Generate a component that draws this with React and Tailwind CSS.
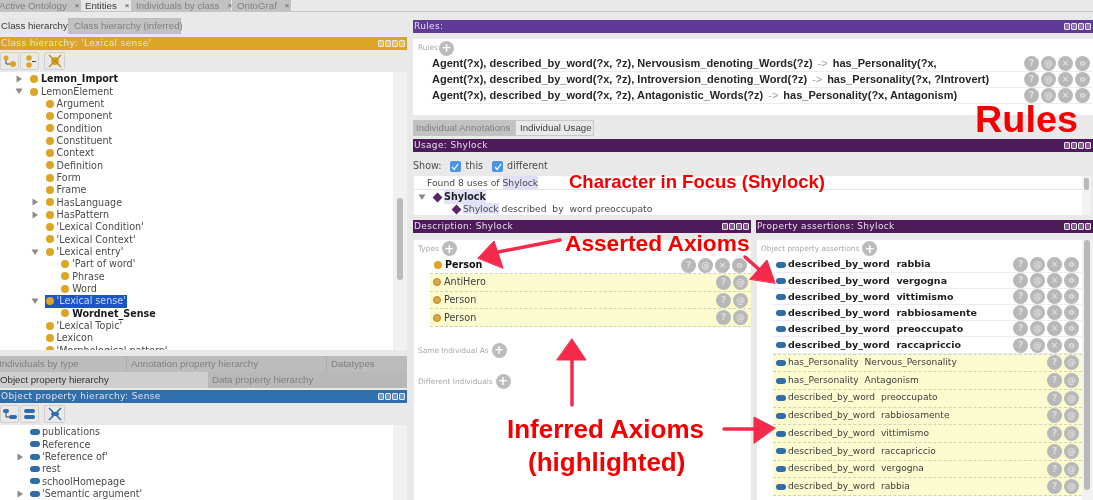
import React from "react";

const sans = "font-['DejaVu_Sans',sans-serif]";
const helv = "font-['Liberation_Sans',sans-serif]";

function HeaderBar({ title, color, className = "" }) {
  return (
    <div className={`h-[13px] flex items-center justify-between pl-[1px] pr-[2px] ${color} ${className}`}>
      <span className={`${sans} text-[9px] tracking-[0.35px] text-[#e6dfe8] whitespace-nowrap leading-none`}>{title}</span>
      <span className="flex gap-[1px]">
        {[0, 1, 2, 3].map((i) => (
          <span key={i} className="w-[6px] h-[7px] border border-[#e8e8e8] bg-white/30 rounded-[1px]" />
        ))}
      </span>
    </div>
  );
}

function Caret({ open }) {
  return (
    <svg width="8" height="8" viewBox="0 0 8 8" className="shrink-0">
      {open ? <path d="M0.5 1.5H7.5L4 7Z" fill="#8a8a8a" /> : <path d="M1.5 0.5V7.5L7 4Z" fill="#8a8a8a" />}
    </svg>
  );
}

function Dot({ size = 8 }) {
  return <span className="rounded-full bg-[#dba625] shrink-0" style={{ width: size, height: size }} />;
}

function Prop({ w = 10 }) {
  return <span className="h-[6px] rounded-[3px] bg-[#2f6ca8] shrink-0" style={{ width: w }} />;
}

const classRows = [
  { t: "Lemon_Import", d: 0, c: "closed", b: true },
  { t: "LemonElement", d: 0, c: "open" },
  { t: "Argument", d: 1 },
  { t: "Component", d: 1 },
  { t: "Condition", d: 1 },
  { t: "Constituent", d: 1 },
  { t: "Context", d: 1 },
  { t: "Definition", d: 1 },
  { t: "Form", d: 1 },
  { t: "Frame", d: 1 },
  { t: "HasLanguage", d: 1, c: "closed" },
  { t: "HasPattern", d: 1, c: "closed" },
  { t: "'Lexical Condition'", d: 1 },
  { t: "'Lexical Context'", d: 1 },
  { t: "'Lexical entry'", d: 1, c: "open" },
  { t: "'Part of word'", d: 2 },
  { t: "Phrase", d: 2 },
  { t: "Word", d: 2 },
  { t: "'Lexical sense'", d: 1, c: "open", sel: true },
  { t: "Wordnet_Sense", d: 2, b: true },
  { t: "'Lexical Topic'", d: 1 },
  { t: "Lexicon", d: 1 },
  { t: "'Morphological pattern'", d: 1 },
];

const propRows = [
  { t: "publications" },
  { t: "Reference" },
  { t: "'Reference of'", c: true },
  { t: "rest" },
  { t: "schoolHomepage" },
  { t: "'Semantic argument'", c: true },
];

function ClassRow({ r }) {
  return (
    <div className="h-[12.33px] flex items-center relative" style={{ paddingLeft: 30 + r.d * 15.6 }}>
      {r.c && (
        <span className="absolute top-[2px]" style={{ left: 15 + r.d * 15.6 }}>
          <Caret open={r.c === "open"} />
        </span>
      )}
      <span className={`flex items-center gap-[3px] h-[13px] ${r.sel ? "bg-[#1c55c8] pl-[1px] -ml-[1px] pr-[1px]" : ""}`}>
        <Dot />
        <span
          className={`${sans} text-[9.6px] leading-none whitespace-nowrap ${r.b ? "font-bold text-[#1a1a1a]" : r.sel ? "text-[#c8d6f2]" : "text-[#4a4a4a]"}`}
        >
          {r.t}
        </span>
      </span>
    </div>
  );
}

function ToolIcons({ kind }) {
  const c = kind === "gold" ? "#dba625" : "#2f6ca8";
  return (
    <div className="h-[22px] flex items-center gap-[1px] pl-0">
      <span className="w-[19px] h-[18px] border border-[#d0d0d0] rounded-[2px] flex items-center justify-center">
        <svg width="14" height="13" viewBox="0 0 14 13">
          <path d="M3 3V9H9" stroke="#444" fill="none" />
          {kind === "gold" ? (
            <>
              <circle cx="3" cy="3" r="2.5" fill={c} />
              <circle cx="10" cy="9" r="3" fill={c} />
            </>
          ) : (
            <>
              <rect x="0" y="1" width="6" height="4" rx="2" fill={c} />
              <rect x="6" y="7" width="8" height="4" rx="2" fill={c} />
            </>
          )}
        </svg>
      </span>
      <span className="w-[19px] h-[18px] border border-[#d0d0d0] rounded-[2px] flex items-center justify-center">
        <svg width="14" height="13" viewBox="0 0 14 13">
          {kind === "gold" ? (
            <>
              <circle cx="6" cy="3" r="2.8" fill={c} />
              <circle cx="6" cy="10" r="2.8" fill={c} />
              <path d="M9 6.5H13" stroke="#444" />
            </>
          ) : (
            <>
              <rect x="1" y="1" width="11" height="4" rx="2" fill={c} />
              <rect x="1" y="7" width="11" height="4" rx="2" fill={c} />
            </>
          )}
        </svg>
      </span>
      <span className="w-[21px] h-[18px] border border-[#d0d0d0] rounded-[2px] flex items-center justify-center ml-[4px]">
        <svg width="14" height="14" viewBox="0 0 14 14">
          {kind === "gold" ? (
            <>
              <circle cx="7" cy="7" r="4" fill={c} />
              <path d="M1 1L13 13M13 1L1 13" stroke="#b98a20" strokeWidth="1.4" />
            </>
          ) : (
            <>
              <rect x="3" y="5" width="8" height="4" rx="2" fill={c} />
              <path d="M1 1L13 13M13 1L1 13" stroke={c} strokeWidth="1.6" />
            </>
          )}
        </svg>
      </span>
    </div>
  );
}

function Circles({ glyphs }) {
  return (
    <span className="flex gap-[2px] shrink-0">
      {glyphs.map((g, i) => (
        <span
          key={i}
          className={`${sans} w-[15px] h-[15px] rounded-full bg-[#b8b8b8] text-[#dedede] text-[9px] font-bold leading-none flex items-center justify-center`}
        >
          {g}
        </span>
      ))}
    </span>
  );
}

function AddBtn({ size = 15 }) {
  return (
    <span
      className={`${sans} rounded-full bg-[#bcbcbc] text-white font-bold text-[12px] leading-none flex items-center justify-center shrink-0`}
      style={{ width: size, height: size }}
    >
      +
    </span>
  );
}

function SectionLabel({ children }) {
  return <span className={`${sans} text-[7.4px] text-[#a8a8a8] whitespace-nowrap`}>{children}</span>;
}

function RuleRow({ children }) {
  return (
    <div className="h-[16px] ml-[5px] flex items-center justify-between border-b border-[#ececec] pr-[2px]">
      <span className={`${helv} text-[11px] font-bold text-[#262626] whitespace-pre pl-[1px]`}>{children}</span>
      <Circles glyphs={["?", "@", "×", "o"]} />
    </div>
  );
}

function Arrow({ children }) {
  return <span className="font-normal text-[#a0a0a0] mx-[5px]">{children}</span>;
}

function AssertedType({ t }) {
  return (
    <div className="h-[16px] ml-[18px] flex items-center justify-between pr-[4px]">
      <span className="flex items-center gap-[3px] pl-[2px]">
        <Dot />
        <span className={`${sans} text-[9.6px] font-bold text-[#111]`}>{t}</span>
      </span>
      <Circles glyphs={["?", "@", "×", "o"]} />
    </div>
  );
}

function InferredRow({ t, icon, gap = "gap-[3px]", text = "text-[9.6px]" }) {
  return (
    <div className={`h-[17.7px] flex items-center justify-between pr-[3px] bg-[#fbfbcf] border-b border-dashed border-[#d4d4b0]`}>
      <span className={`flex items-center ${gap} pl-[3px]`}>
        {icon}
        <span className={`${sans} ${text} text-[#3e3e3e] whitespace-pre`}>{t}</span>
      </span>
      <Circles glyphs={["?", "@"]} />
    </div>
  );
}

function Tab({ children, active, className = "" }) {
  return (
    <span
      className={`${helv} text-[9.7px] leading-none flex items-center whitespace-nowrap ${active ? "bg-[#e6e6e6] text-[#3c3c3c]" : "bg-[#c2c2c2] text-[#808080]"} ${className}`}
    >
      {children}
    </span>
  );
}

function Annotations() {
  return (
    <>
      <svg className="absolute left-0 top-0 pointer-events-none" width="1093" height="500" viewBox="0 0 1093 500">
        <g fill="#f52a4a" stroke="#f52a4a" strokeLinejoin="round" strokeLinecap="round">
          <path d="M560 240L488 254" strokeWidth="3.5" fill="none" />
          <path d="M478 258L494 241L503 268Z" strokeWidth="1" />
          <path d="M572 405V358" strokeWidth="3.5" fill="none" />
          <path d="M572 339L586 360H557Z" strokeWidth="1" />
          <path d="M745 257L762 272" strokeWidth="3.5" fill="none" />
          <path d="M775 283L767 260L750 279Z" strokeWidth="1" />
          <path d="M724 429H758" strokeWidth="3.5" fill="none" />
          <path d="M775 428L754 417V443Z" strokeWidth="1" />
        </g>
      </svg>
      <span className={`${helv} absolute left-[975px] top-[101px] text-[37.8px] font-bold text-[#f50000] leading-none whitespace-nowrap`}>Rules</span>
      <span className={`${helv} absolute left-[569px] top-[173px] text-[18.5px] font-bold text-[#f50000] leading-none whitespace-nowrap`}>Character in Focus (Shylock)</span>
      <span className={`${helv} absolute left-[565px] top-[232px] text-[22.7px] font-bold text-[#f50000] leading-none whitespace-nowrap`}>Asserted Axioms</span>
      <span className={`${helv} absolute left-[507px] top-[416px] text-[26px] font-bold text-[#f50000] leading-none whitespace-nowrap`}>Inferred Axioms</span>
      <span className={`${helv} absolute left-[528px] top-[449px] text-[26px] font-bold text-[#f50000] leading-none whitespace-nowrap`}>(highlighted)</span>
    </>
  );
}

export default function App() {
  const asserted = ["rabbia", "vergogna", "vittimismo", "rabbiosamente", "preoccupato", "raccapriccio"];
  const inferredProps = [
    ["has_Personality", "Nervous_Personality"],
    ["has_Personality", "Antagonism"],
    ["described_by_word", "preoccupato"],
    ["described_by_word", "rabbiosamente"],
    ["described_by_word", "vittimismo"],
    ["described_by_word", "raccapriccio"],
    ["described_by_word", "vergogna"],
    ["described_by_word", "rabbia"],
  ];

  return (
    <div className="relative w-[1093px] h-[500px] overflow-hidden bg-[#e9e9e9] blur-[0.6px]">
      {/* top tabs */}
      <div className="h-[12px] flex items-stretch gap-[1px] border-b border-[#c4c4c4] -ml-[1px]">
        <Tab className="w-[82px] pl-0"><span>Active Ontology</span><span className="ml-[8px] text-[#555] text-[8px]">×</span></Tab>
        <Tab active className="w-[48px] pl-[3px]"><span>Entities</span><span className="ml-[8px] text-[#333] text-[8px]">×</span></Tab>
        <Tab className="w-[100px] pl-[5px]"><span>Individuals by class</span><span className="ml-[8px] text-[#555] text-[8px]">×</span></Tab>
        <Tab className="w-[59px] pl-[5px]"><span>OntoGraf</span><span className="ml-[8px] text-[#555] text-[8px]">×</span></Tab>
      </div>

      <div className="flex h-[488px]">
        {/* left column */}
        <div className="w-[407px] shrink-0 flex flex-col">
          <div className="h-[16px] mt-[6px] flex items-stretch">
            <Tab active className="w-[68px] pl-[1px]">Class hierarchy</Tab>
            <Tab className="w-[113px] pl-[5px] border border-[#bcbcbc]">Class hierarchy (inferred)</Tab>
          </div>
          <div className="h-[3px]" />
          <HeaderBar title="Class hierarchy: 'Lexical sense'" color="bg-[#dba628]" />
          <ToolIcons kind="gold" />
          <div className="h-[278px] flex bg-white overflow-hidden">
            <div className="flex-1 overflow-hidden">
              <div className="h-[1px]" />
              {classRows.map((r) => (
                <ClassRow key={r.t} r={r} />
              ))}
            </div>
            <div className="w-[14px] bg-[#f1f1f1] pt-[126px] pl-[4px]">
              <div className="w-[6px] h-[82px] bg-[#bababa] rounded-[3px]" />
            </div>
          </div>
          <div className="h-[6px]" />
          <div className="h-[16px] flex items-stretch bg-[#bcbcbc]">
            <Tab className="w-[128px] !bg-transparent -ml-[1px] border-r border-[#adadad]">Individuals by type</Tab>
            <Tab className="w-[200px] pl-[4px] !bg-transparent border-r border-[#adadad]">Annotation property hierarchy</Tab>
            <Tab className="pl-[4px] !bg-transparent">Datatypes</Tab>
          </div>
          <div className="h-[16px] flex items-stretch">
            <Tab active className="w-[208px] !bg-[#cfcfcf] !text-[#303030]">Object property hierarchy</Tab>
            <Tab className="flex-1 pl-[4px] !bg-[#b8b8b8]">Data property hierarchy</Tab>
          </div>
          <div className="h-[2px]" />
          <HeaderBar title="Object property hierarchy: Sense" color="bg-[#2f70ac]" />
          <ToolIcons kind="blue" />
          <div className="flex-1 flex bg-white overflow-hidden">
            <div className="flex-1 pt-[1px]">
              {propRows.map((r) => (
                <div key={r.t} className="h-[12.33px] flex items-center gap-[2px] pl-[30px] relative">
                  {r.c && (
                    <span className="absolute left-[16px] top-[2px]">
                      <Caret />
                    </span>
                  )}
                  <Prop />
                  <span className={`${sans} text-[9.6px] leading-none text-[#4a4a4a] whitespace-nowrap`}>{r.t}</span>
                </div>
              ))}
            </div>
            <div className="w-[14px] bg-[#f1f1f1]" />
          </div>
        </div>

        {/* right column */}
        <div className="flex-1 ml-[6px] flex flex-col min-w-0">
          <div className="h-[8px] shrink-0" />
          <HeaderBar title="Rules:" color="bg-[#5f3a96]" />
          <div className="h-[6px] shrink-0" />
          <div className="h-[76px] bg-white pl-[1px] pr-[1px] shrink-0">
            <div className="h-[17px] pt-[1px] flex items-center gap-[1px] pl-[4px]">
              <SectionLabel>Rules</SectionLabel>
              <AddBtn />
            </div>
            <div className="pl-[12px]">
              <RuleRow>Agent(?x), described_by_word(?x, ?z), Nervousism_denoting_Words(?z)<Arrow>-&gt;</Arrow>has_Personality(?x,</RuleRow>
              <RuleRow>Agent(?x), described_by_word(?x, ?z), Introversion_denoting_Word(?z)<Arrow>-&gt;</Arrow>has_Personality(?x, ?Introvert)</RuleRow>
              <RuleRow>Agent(?x), described_by_word(?x, ?z), Antagonistic_Words(?z)<Arrow>-&gt;</Arrow>has_Personality(?x, Antagonism)</RuleRow>
            </div>
          </div>
          <div className="h-[5px] shrink-0" />
          <div className="h-[16px] flex items-stretch shrink-0">
            <Tab className="w-[102px] pl-[3px]">Individual Annotations</Tab>
            <Tab active className="w-[79px] pl-[4px] border border-[#c8c8c8] !bg-[#e9e9e9]">Individual Usage</Tab>
          </div>
          <div className="h-[3px] shrink-0" />
          <HeaderBar title="Usage: Shylock" color="bg-[#4d1a5a]" />
          <div className="h-[24px] flex items-center pt-[5px] shrink-0">
            <span className={`${sans} text-[9.6px] text-[#4a4a4a]`}>Show:</span>
            <span className="w-[11px] h-[11px] ml-[8px] rounded-[2px] bg-[#4a94e6] text-white flex items-center justify-center">
              <svg width="8" height="8" viewBox="0 0 8 8"><path d="M1 4L3.2 6.5L7 1" stroke="#fff" strokeWidth="1.3" fill="none" /></svg>
            </span>
            <span className={`${sans} text-[9.6px] text-[#4a4a4a] ml-[5px]`}>this</span>
            <span className="w-[11px] h-[11px] ml-[9px] rounded-[2px] bg-[#4a94e6] text-white flex items-center justify-center">
              <svg width="8" height="8" viewBox="0 0 8 8"><path d="M1 4L3.2 6.5L7 1" stroke="#fff" strokeWidth="1.3" fill="none" /></svg>
            </span>
            <span className={`${sans} text-[9.6px] text-[#4a4a4a] ml-[4px]`}>different</span>
          </div>
          <div className="h-[39px] flex bg-white ml-[1px] mr-[2px] overflow-hidden shrink-0">
            <div className="flex-1 min-w-0">
              <div className={`${sans} h-[14px] pt-[1px] pl-[13px] flex items-center text-[9.2px] text-[#4a4a4a] border-b border-[#e4e4e4] whitespace-pre`}>
                Found 8 uses of <span className="bg-[#dfe0f8]">Shylock</span>
              </div>
              <div className="h-[13px] pt-[1px] flex items-center pl-[4px] gap-[8px]">
                <Caret open />
                <span className="flex items-center gap-[3px]">
                  <span className="w-[7px] h-[7px] rotate-45 bg-[#5a2568]" />
                  <span className={`${sans} text-[9.6px] font-bold text-[#222] bg-[#e2e2fa]`}>Shylock</span>
                </span>
              </div>
              <div className="h-[12px] flex items-center pl-[39px] gap-[3px]">
                <span className="w-[7px] h-[7px] rotate-45 bg-[#5a2568]" />
                <span className={`${sans} text-[9.2px] text-[#4a4a4a] whitespace-pre`}>
                  <span className="bg-[#e2e2fa]">Shylock</span> described  by  word preoccupato
                </span>
              </div>
            </div>
            <div className="w-[9px] bg-[#f2f2f2] pl-[2px] pt-[2px]">
              <div className="w-[5px] h-[12px] bg-[#b8b8b8] rounded-[2px]" />
            </div>
          </div>
          <div className="h-[5px] shrink-0" />
          <div className="flex-1 flex gap-[5px] min-h-0">
            {/* description */}
            <div className="w-[338px] shrink-0 flex flex-col">
              <HeaderBar title="Description: Shylock" color="bg-[#4d1a5a]" />
              <div className="h-[7px] shrink-0" />
              <div className="flex-1 bg-white ml-[1px]">
                <div className="h-[17px] flex items-center gap-[3px] pl-[4px]">
                  <SectionLabel>Types</SectionLabel>
                  <AddBtn />
                </div>
                <AssertedType t="Person" />
                <div className="ml-[16px] border-t border-dashed border-[#d4d4b0]">
                  {["AntiHero", "Person", "Person"].map((t, i) => (
                    <InferredRow key={i} t={t} icon={<span className="w-[8px] h-[8px] rounded-full bg-[#d6aa4e] border border-[#b98a20]" />} />
                  ))}
                </div>
                <div className="mt-[15px] h-[16px] flex items-center gap-[3px] pl-[4px]">
                  <SectionLabel>Same Individual As</SectionLabel>
                  <AddBtn />
                </div>
                <div className="mt-[15px] h-[16px] flex items-center gap-[3px] pl-[4px]">
                  <SectionLabel>Different Individuals</SectionLabel>
                  <AddBtn />
                </div>
              </div>
            </div>
            {/* property assertions */}
            <div className="flex-1 min-w-0 flex flex-col">
              <HeaderBar title="Property assertions: Shylock" color="bg-[#4d1a5a]" />
              <div className="h-[7px] shrink-0" />
              <div className="flex-1 bg-white flex ml-[1px]">
                <div className="flex-1 min-w-0">
                  <div className="h-[17px] flex items-center gap-[3px] pl-[4px]">
                    <SectionLabel>Object property assertions</SectionLabel>
                    <AddBtn />
                  </div>
                  {asserted.map((w) => (
                    <div key={w} className="h-[16.1px] ml-[16px] flex items-center justify-between border-b border-[#ececec] pr-[3px]">
                      <span className="flex items-center gap-[2px] pl-[3px]">
                        <Prop />
                        <span className={`${sans} text-[9.5px] font-bold text-[#1d1d1d] whitespace-pre`}>described_by_word  {w}</span>
                      </span>
                      <Circles glyphs={["?", "@", "×", "o"]} />
                    </div>
                  ))}
                  <div className="ml-[16px] border-t border-dashed border-[#d4d4b0]">
                    {inferredProps.map(([a, b], i) => (
                      <InferredRow key={i} t={`${a}  ${b}`} icon={<Prop />} gap="gap-[2px]" text="text-[9.1px]" />
                    ))}
                  </div>
                </div>
                <div className="w-[11px] pl-[2px] bg-[#f2f2f2] shrink-0">
                  <div className="w-[6px] h-[250px] bg-[#b8b8b8] rounded-[3px]" />
                </div>
              </div>
            </div>
          </div>
        </div>
      </div>
      <Annotations />
    </div>
  );
}
